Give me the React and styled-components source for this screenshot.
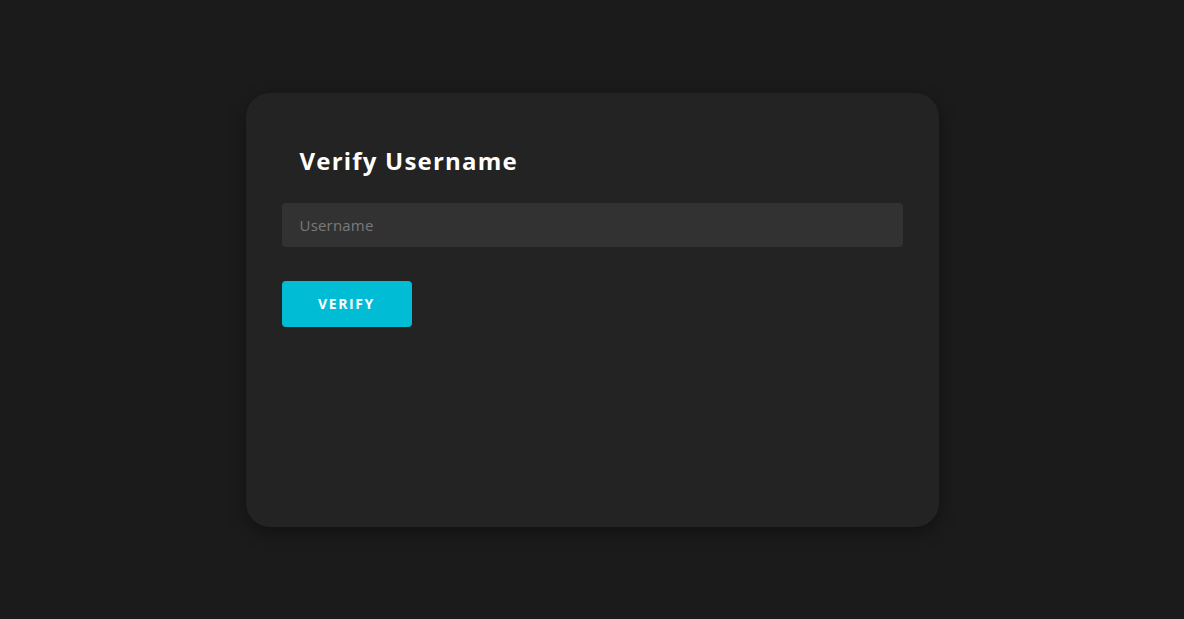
import React from 'react'
import styled, { createGlobalStyle } from 'styled-components'

const GlobalStyle = createGlobalStyle`
  html, body {
    margin: 0;
    padding: 0;
    height: 100%;
    background: #1b1b1b;
    font-family: "Open Sans", "Noto Sans", sans-serif;
  }
  #root {
    height: 100%;
  }
`

const Page = styled.div`
  height: 100vh;
  display: flex;
  align-items: center;
  justify-content: center;
`

const Card = styled.div`
  box-sizing: border-box;
  width: 693px;
  height: 434px;
  padding: 36px;
  background: #232323;
  border-radius: 24px;
  box-shadow: 0 6px 18px rgba(0, 0, 0, 0.35);
  display: flex;
  flex-direction: column;
  align-items: flex-start;
`

const Title = styled.h2`
  margin: 17px 18px 28px;
  font-size: 24px;
  line-height: 29px;
  font-weight: 700;
  letter-spacing: 1.2px;
  color: #ffffff;
`

const Input = styled.input`
  box-sizing: border-box;
  width: 100%;
  height: 44px;
  padding: 0 18px;
  border: none;
  border-radius: 4px;
  background: #323232;
  color: #eeeeee;
  font-family: inherit;
  font-size: 15px;
  letter-spacing: 0.2px;
  outline: none;

  &::placeholder {
    color: #7a7a7a;
  }
`

const Button = styled.button`
  margin-top: 34px;
  width: 130px;
  height: 46px;
  border: none;
  border-radius: 4px;
  background: #00bcd4;
  color: #ffffff;
  font-family: inherit;
  font-size: 14px;
  font-weight: 700;
  letter-spacing: 1.6px;
  cursor: pointer;
`

const App = () => {
  return (
    <>
      <GlobalStyle />
      <Page>
        <Card>
          <Title>Verify Username</Title>
          <Input placeholder="Username" />
          <Button>VERIFY</Button>
        </Card>
      </Page>
    </>
  )
}

export default App
